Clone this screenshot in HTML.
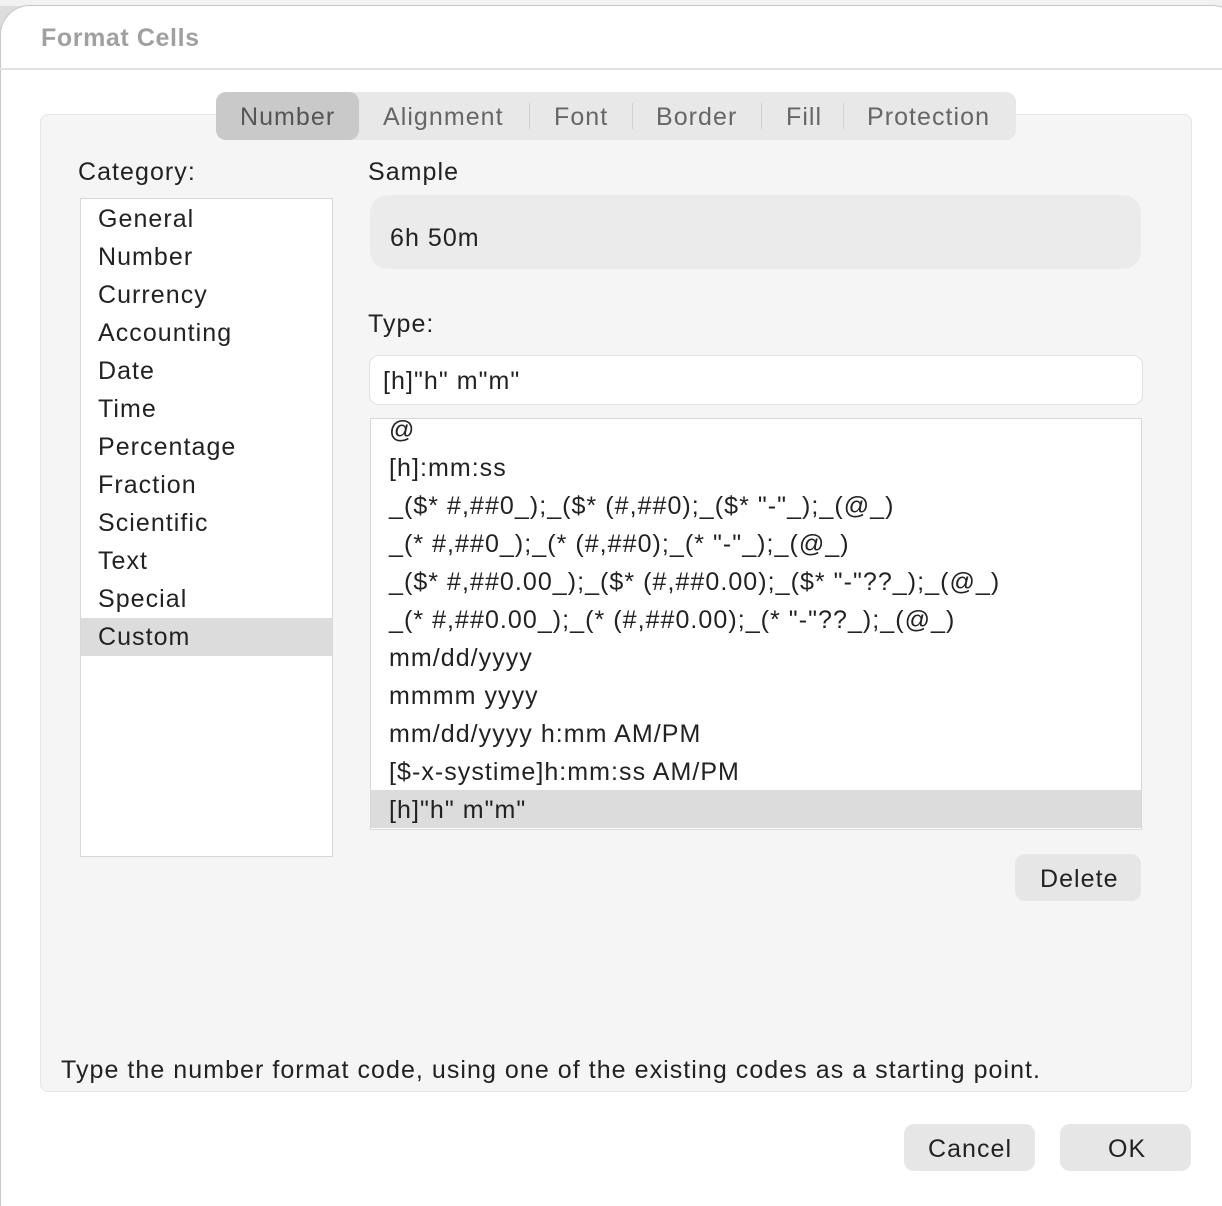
<!DOCTYPE html>
<html><head><style>
html,body{margin:0;width:1222px;height:1206px;overflow:hidden}
body{background:#dcdcdc;position:relative;font-family:"Liberation Sans",sans-serif;color:#222}
.a{position:absolute}
#dlg{left:0;top:5px;width:1240px;height:1240px;background:#fff;border-radius:30px 30px 0 0;border:1px solid #c8c8c8}
.t{font-size:25px;white-space:nowrap;letter-spacing:1.05px}
</style></head><body>
<div class="a" style="left:0;top:0;width:1222px;height:6px;background:#f2f2f2"></div>
<div id="dlg" class="a"></div>
<div class="a t" style="left:41px;top:24px;color:#a0a0a0;font-weight:bold;font-size:25px;letter-spacing:0.6px">Format Cells</div>
<div class="a" style="left:0;top:68px;width:1222px;height:2px;background:#e2e2e2"></div>
<div class="a" style="left:40px;top:114px;width:1150px;height:976px;background:#f5f5f5;border:1px solid #e6e6e6;border-radius:8px"></div>
<div class="a" style="left:216px;top:92px;width:800px;height:48px;background:#e8e8e8;border-radius:10px"></div>
<div class="a" style="left:216px;top:92px;width:143px;height:48px;background:#c9c9c9;border-radius:10px"></div>
<div class="a t" style="left:240px;top:103px;color:#555">Number</div>
<div class="a t" style="left:383px;top:103px;color:#666">Alignment</div>
<div class="a" style="left:529px;top:103px;width:1px;height:26px;background:#d0d0d0"></div>
<div class="a t" style="left:554px;top:103px;color:#666">Font</div>
<div class="a" style="left:632px;top:103px;width:1px;height:26px;background:#d0d0d0"></div>
<div class="a t" style="left:656px;top:103px;color:#666">Border</div>
<div class="a" style="left:761px;top:103px;width:1px;height:26px;background:#d0d0d0"></div>
<div class="a t" style="left:786px;top:103px;color:#666">Fill</div>
<div class="a" style="left:843px;top:103px;width:1px;height:26px;background:#d0d0d0"></div>
<div class="a t" style="left:867px;top:103px;color:#666">Protection</div>

<div class="a t" style="left:78px;top:158px">Category:</div>
<div class="a" style="left:80px;top:198px;width:251px;height:657px;background:#fff;border:1px solid #d8d8d8"></div>
<div class="a" style="left:81px;top:618px;width:251px;height:38px;background:#dcdcdc"></div>
<div class="a t" style="left:98px;top:200px;line-height:38px">General<br>Number<br>Currency<br>Accounting<br>Date<br>Time<br>Percentage<br>Fraction<br>Scientific<br>Text<br>Special<br>Custom</div>

<div class="a t" style="left:368px;top:158px">Sample</div>
<div class="a" style="left:370px;top:195px;width:771px;height:74px;background:#ebebeb;border-radius:18px"></div>
<div class="a t" style="left:390px;top:224px">6h 50m</div>
<div class="a t" style="left:368px;top:310px">Type:</div>
<div class="a" style="left:369px;top:355px;width:772px;height:48px;background:#fff;border:1px solid #e2e2e2;border-radius:10px"></div>
<div class="a t" style="left:383px;top:367px">[h]"h" m"m"</div>
<div class="a" style="left:370px;top:418px;width:770px;height:410px;background:#fff;border:1px solid #d8d8d8;overflow:hidden">
<div class="a" style="left:0;top:371px;width:770px;height:38px;background:#dcdcdc"></div>
<div class="a t" style="left:18px;top:-8px;line-height:38px">@<br>[h]:mm:ss<br>_($* #,##0_);_($* (#,##0);_($* "-"_);_(@_)<br>_(* #,##0_);_(* (#,##0);_(* "-"_);_(@_)<br>_($* #,##0.00_);_($* (#,##0.00);_($* "-"??_);_(@_)<br>_(* #,##0.00_);_(* (#,##0.00);_(* "-"??_);_(@_)<br>mm/dd/yyyy<br>mmmm yyyy<br>mm/dd/yyyy h:mm AM/PM<br>[$-x-systime]h:mm:ss AM/PM<br>[h]"h" m"m"</div>
</div>
<div class="a" style="left:1015px;top:854px;width:126px;height:47px;background:#e6e6e6;border-radius:10px"></div>
<div class="a t" style="left:1040px;top:865px">Delete</div>
<div class="a t" style="left:61px;top:1056px">Type the number format code, using one of the existing codes as a starting point.</div>
<div class="a" style="left:904px;top:1124px;width:131px;height:47px;background:#e6e6e6;border-radius:10px"></div>
<div class="a t" style="left:928px;top:1135px">Cancel</div>
<div class="a" style="left:1060px;top:1124px;width:131px;height:47px;background:#e6e6e6;border-radius:10px"></div>
<div class="a t" style="left:1108px;top:1135px">OK</div>
</body></html>
